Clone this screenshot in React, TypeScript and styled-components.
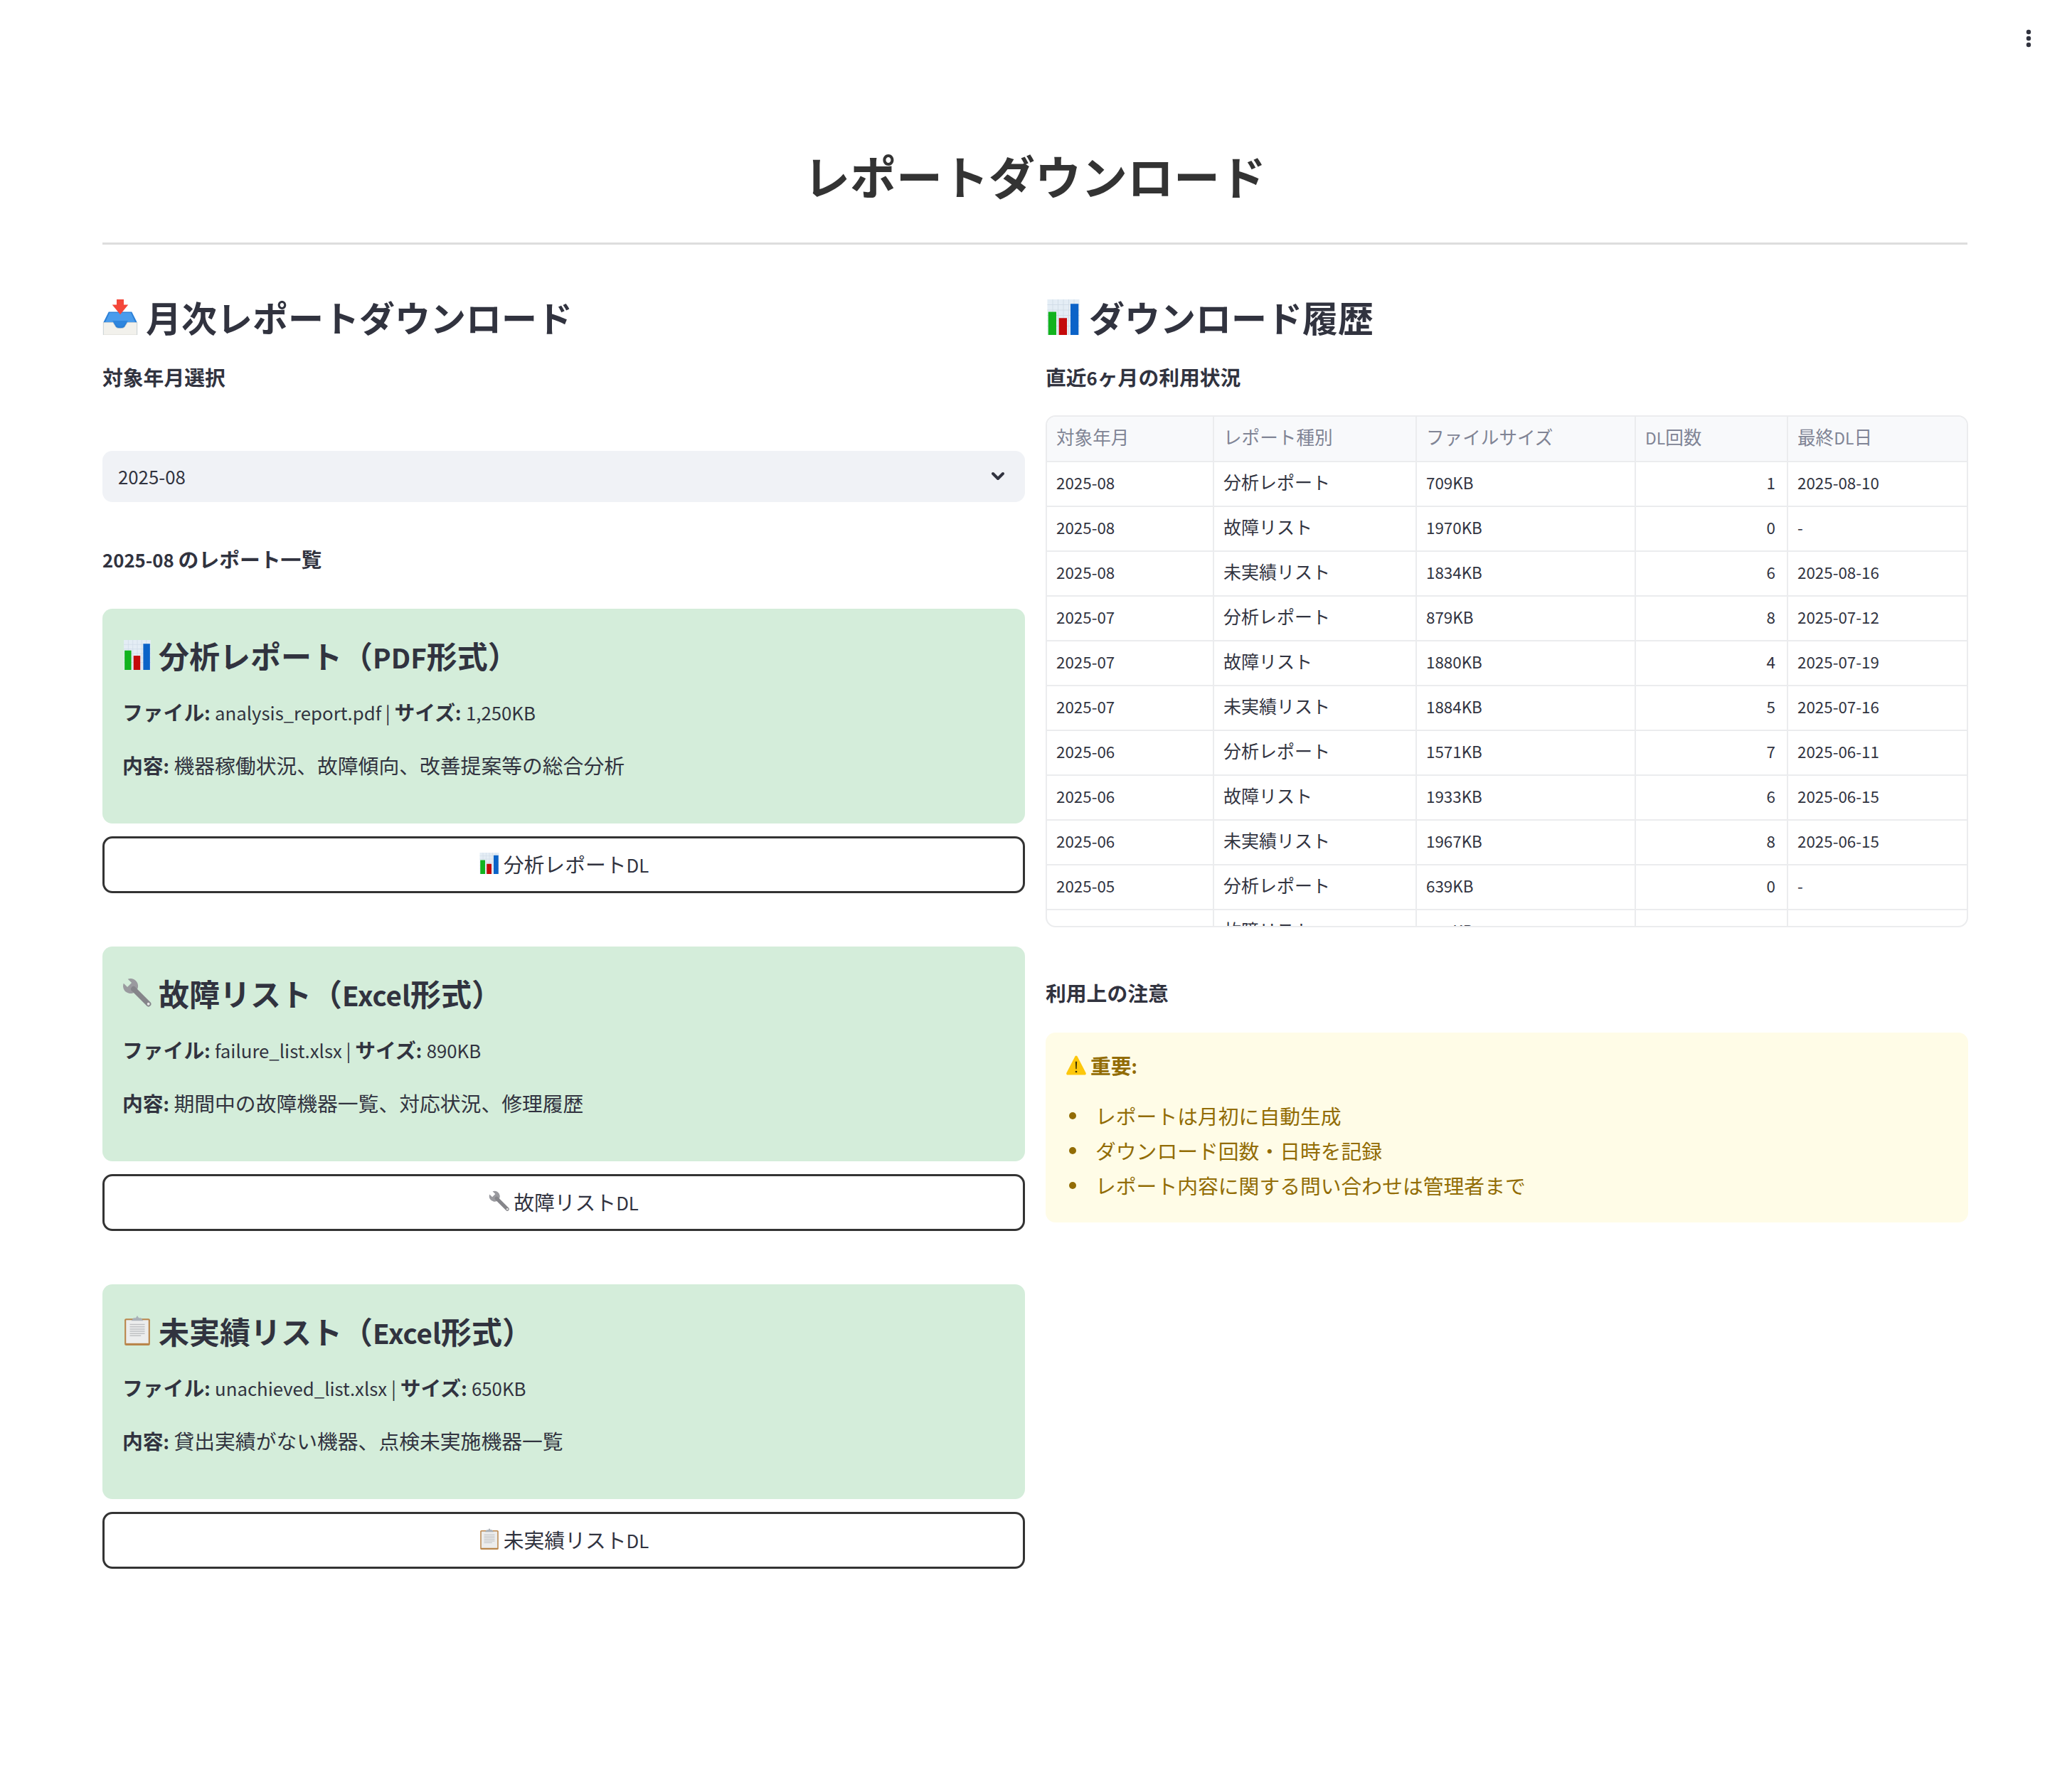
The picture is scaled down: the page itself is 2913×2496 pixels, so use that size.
import React from "react";
import styled, { createGlobalStyle } from "styled-components";

const GlobalStyle = createGlobalStyle`
  html, body {
    margin: 0;
    padding: 0;
    background: #fff;
  }
  body {
    font-family: "Noto Sans CJK JP", "Noto Sans", sans-serif;
    color: #31333f;
  }
`;

const Page = styled.div`
  width: 2913px;
  height: 2496px;
  padding: 197px 147px 0 144px;
  box-sizing: border-box;
  position: relative;
  overflow: hidden;
`;

const MenuDots = styled.svg`
  position: absolute;
  top: 38px;
  right: 55px;
`;

const Title = styled.h1`
  margin: 0;
  font-size: 65px;
  line-height: 98px;
  font-weight: 700;
  text-align: center;
  color: #333;
`;

const Rule = styled.hr`
  margin: 46px 0 0;
  border: 0;
  height: 3px;
  background: #ddd;
`;

const Columns = styled.div`
  display: grid;
  grid-template-columns: 1297px 1297px;
  column-gap: 29px;
  margin-top: 65px;
`;

const Column = styled.div`
  display: flex;
  flex-direction: column;
`;

const SectionTitle = styled.h2`
  margin: 0;
  font-size: 50px;
  line-height: 72px;
  padding-bottom: 2px;
  font-weight: 600;
  display: flex;
  align-items: center;
  gap: 11px;
  svg {
    margin-bottom: -2px;
  }
`;

const Label = styled.div<{ $top: number }>`
  margin-top: ${(p) => p.$top}px;
  font-size: 28.8px;
  line-height: 40px;
  font-weight: 600;
`;

const Select = styled.div`
  margin-top: 84px;
  height: 72px;
  border-radius: 14px;
  background: #f0f2f6;
  padding: 0 26px 0 22px;
  display: flex;
  align-items: center;
  justify-content: space-between;
  font-size: 28.8px;
`;

const ReportBlock = styled.section`
  margin-top: 50px;
  & + & {
    margin-top: 75px;
  }
`;

const Card = styled.div`
  background: #d4edda;
  border-radius: 14px;
  padding: 35px 28px 60px;
`;

const CardTitle = styled.h3`
  margin: 0;
  font-size: 43px;
  line-height: 60px;
  font-weight: 600;
  display: flex;
  align-items: center;
  gap: 9px;
`;

const CardLine = styled.p<{ $top: number }>`
  margin: ${(p) => p.$top}px 0 0;
  font-size: 28.8px;
  line-height: 44px;
  strong {
    font-weight: 600;
  }
`;

const DownloadButton = styled.button`
  margin-top: 18px;
  width: 100%;
  height: 80px;
  box-sizing: border-box;
  border: 3px solid #333;
  border-radius: 14px;
  padding: 0 0 4px;
  background: #fff;
  color: #31333f;
  font-family: inherit;
  font-size: 28.8px;
  display: flex;
  align-items: center;
  justify-content: center;
  gap: 5px;
`;

const TableFrame = styled.div`
  margin-top: 34px;
  height: 720px;
  box-sizing: border-box;
  border: 2px solid #ebecee;
  border-radius: 14px;
  overflow: hidden;
`;

const Table = styled.table`
  width: 100%;
  table-layout: fixed;
  border-collapse: collapse;
  font-size: 25px;
`;

const HeadCell = styled.th<{ $width: number }>`
  width: ${(p) => p.$width}px;
  height: 63px;
  box-sizing: border-box;
  padding: 0 14px 7px 13px;
  background: #f8f9fb;
  color: #808495;
  font-size: 25.6px;
  font-weight: 400;
  text-align: left;
  border-right: 2px solid #ebecee;
  border-bottom: 2px solid #ebecee;
  &:last-child {
    border-right: 0;
  }
`;

const Cell = styled.td<{ $right?: boolean }>`
  height: 63px;
  box-sizing: border-box;
  padding: 0 16px 7px 13px;
  text-align: ${(p) => (p.$right ? "right" : "left")};
  border-right: 2px solid #ebecee;
  border-bottom: 2px solid #ebecee;
  &:last-child {
    border-right: 0;
  }
`;

const Notice = styled.div`
  margin-top: 36px;
  height: 267px;
  box-sizing: border-box;
  background: #fffce7;
  border-radius: 14px;
  padding: 26px 29px 0;
  color: #926c05;
  font-size: 28.8px;
`;

const NoticeHead = styled.div`
  display: flex;
  align-items: center;
  gap: 5px;
  margin-left: -1px;
  line-height: 40px;
  font-weight: 600;
`;

const NoticeList = styled.ul`
  margin: 26px 0 0;
  padding: 0 0 0 41px;
  list-style: none;
`;

const NoticeItem = styled.li`
  position: relative;
  line-height: 49px;
  &::before {
    content: "";
    position: absolute;
    left: -37px;
    top: 20px;
    width: 10px;
    height: 10px;
    border-radius: 50%;
    background: #926c05;
  }
`;

const Lat = styled.span`
  font-size: 0.895em;
  line-height: 1;
`;

// Latin runs are narrower in the reference than in the CJK face, so they get scaled down
const Txt = ({ children }: { children: string }) => (
  <>
    {children.split(/([\x20-\x7e]+)/).map((part, i) =>
      /[\x21-\x7e]/.test(part) ? <Lat key={i}>{part}</Lat> : part
    )}
  </>
);

const ChartIcon = ({ size }: { size: number }) => (
  <svg width={size} height={size} viewBox="0 0 40 40">
    <rect x="2" y="0" width="36" height="40" fill="#e4edf5" />
    <path
      d="M2 6h36M2 12h36M2 18h36M2 24h36M2 30h36M8 0v40M14 0v40M20 0v40M26 0v40M32 0v40"
      stroke="#cfdbe6"
      strokeWidth="0.7"
    />
    <rect x="3" y="14" width="9" height="26" fill="#12b31e" />
    <rect x="15" y="21" width="9" height="19" fill="#c40a0a" />
    <rect x="28" y="5" width="9" height="35" fill="#0b63c8" />
  </svg>
);

const InboxIcon = ({ size }: { size: number }) => (
  <svg width={size} height={size} viewBox="0 0 40 40">
    <path d="M7 14h26l6 12v14H1V26z" fill="#2b7fd6" />
    <path d="M8 15h24l5 11H3z" fill="#4a9cec" />
    <path d="M1 26h11l3 5c1 1 2 1.500 5 1.500s4-.5 5-1.500l3-5h11v14H1z" fill="#f2f1ec" stroke="#d2d1cb" strokeWidth="0.6" />
    <path d="M11 24h18l-5 5c-2 2-6 2-8 0z" fill="#2f86de" />
    <path d="M16 0h8v6h5L20 17 11 6h5z" fill="#f4473a" />
  </svg>
);

const WrenchIcon = ({ size }: { size: number }) => (
  <svg width={size} height={size} viewBox="0 0 40 40">
    <path
      d="M7.350 1.690 L12.420 6.760 L6.760 12.420 L1.690 7.350 A10 10 0 1 0 7.350 1.690 Z"
      fill="#9a9a9f"
    />
    <path d="M15 15L35 35" stroke="#85858a" strokeWidth="7" strokeLinecap="round" />
    <circle cx="35" cy="35" r="1.800" fill="#e7e7e7" />
  </svg>
);

const ClipboardIcon = ({ size }: { size: number }) => (
  <svg width={size} height={size} viewBox="0 0 40 40">
    <rect x="3" y="4" width="34" height="36" rx="2" fill="#b9854a" />
    <rect x="5" y="6" width="30" height="31" fill="#eceded" />
    <path d="M10 12h20M10 15h20M10 18h20M10 21h20M10 24h20M10 27h15" stroke="#bfc1c3" strokeWidth="1.400" />
    <path d="M12 7l3-4h3l2-3 2 3h3l3 4z" fill="#aab1b8" />
  </svg>
);

const WarnIcon = ({ size }: { size: number }) => (
  <svg width={size} height={size} viewBox="0 0 40 40">
    <path d="M20 2 C21.500 2 22 3 23 5 L38 34 C39 36 38 38 36 38 H4 C2 38 1 36 2 34 L17 5 C18 3 18.500 2 20 2 Z" fill="#fdc70c" />
    <path d="M18.500 13h3l-.6 14h-1.800z" fill="#3a3000" />
    <circle cx="20" cy="32" r="1.800" fill="#3a3000" />
  </svg>
);

const Chevron = () => (
  <svg width="24" height="24" viewBox="0 0 24 24" fill="none" stroke="#31333f" strokeWidth="4" strokeLinecap="round" strokeLinejoin="round">
    <path d="M5 8l7 7 7-7" />
  </svg>
);

const reports = [
  {
    Icon: ChartIcon,
    title: "分析レポート（PDF形式）",
    file: "analysis_report.pdf",
    size: "1,250KB",
    body: "機器稼働状況、故障傾向、改善提案等の総合分析",
    button: "分析レポートDL",
  },
  {
    Icon: WrenchIcon,
    title: "故障リスト（Excel形式）",
    file: "failure_list.xlsx",
    size: "890KB",
    body: "期間中の故障機器一覧、対応状況、修理履歴",
    button: "故障リストDL",
  },
  {
    Icon: ClipboardIcon,
    title: "未実績リスト（Excel形式）",
    file: "unachieved_list.xlsx",
    size: "650KB",
    body: "貸出実績がない機器、点検未実施機器一覧",
    button: "未実績リストDL",
  },
];

const columns = [
  { label: "対象年月", width: 234 },
  { label: "レポート種別", width: 285 },
  { label: "ファイルサイズ", width: 308 },
  { label: "DL回数", width: 214 },
  { label: "最終DL日", width: 252 },
];

const history = [
  ["2025-08", "分析レポート", "709KB", "1", "2025-08-10"],
  ["2025-08", "故障リスト", "1970KB", "0", "-"],
  ["2025-08", "未実績リスト", "1834KB", "6", "2025-08-16"],
  ["2025-07", "分析レポート", "879KB", "8", "2025-07-12"],
  ["2025-07", "故障リスト", "1880KB", "4", "2025-07-19"],
  ["2025-07", "未実績リスト", "1884KB", "5", "2025-07-16"],
  ["2025-06", "分析レポート", "1571KB", "7", "2025-06-11"],
  ["2025-06", "故障リスト", "1933KB", "6", "2025-06-15"],
  ["2025-06", "未実績リスト", "1967KB", "8", "2025-06-15"],
  ["2025-05", "分析レポート", "639KB", "0", "-"],
  ["2025-05", "故障リスト", "690KB", "1", "2025-05-21"],
];

const App = () => (
  <Page>
    <GlobalStyle />
    <MenuDots width="12" height="34" viewBox="0 0 12 34" fill="#31333f">
      <circle cx="6" cy="7" r="3.200" />
      <circle cx="6" cy="16" r="3.200" />
      <circle cx="6" cy="25" r="3.200" />
    </MenuDots>
    <Title>レポートダウンロード</Title>
    <Rule />
    <Columns>
      <Column>
        <SectionTitle>
          <InboxIcon size={50} />
          月次レポートダウンロード
        </SectionTitle>
        <Label $top={27}>対象年月選択</Label>
        <Select>
          <Lat>2025-08</Lat>
          <Chevron />
        </Select>
        <Label $top={60}>
          <Txt>2025-08 のレポート一覧</Txt>
        </Label>
        {reports.map(({ Icon, title, file, size, body, button }) => (
          <ReportBlock key={button}>
            <Card>
              <CardTitle>
                <Icon size={42} />
                <span>
                  <Txt>{title}</Txt>
                </span>
              </CardTitle>
              <CardLine $top={28}>
                <strong>
                  <Txt>ファイル:</Txt>
                </strong>{" "}
                <Txt>{`${file} | `}</Txt>
                <strong>
                  <Txt>サイズ:</Txt>
                </strong>{" "}
                <Lat>{size}</Lat>
              </CardLine>
              <CardLine $top={31}>
                <strong>
                  <Txt>内容:</Txt>
                </strong>{" "}
                {body}
              </CardLine>
            </Card>
            <DownloadButton>
              <Icon size={30} />
              <span>
                <Txt>{button}</Txt>
              </span>
            </DownloadButton>
          </ReportBlock>
        ))}
      </Column>
      <Column>
        <SectionTitle>
          <ChartIcon size={50} />
          ダウンロード履歴
        </SectionTitle>
        <Label $top={27}>
          <Txt>直近6ヶ月の利用状況</Txt>
        </Label>
        <TableFrame>
          <Table>
            <thead>
              <tr>
                {columns.map((c) => (
                  <HeadCell key={c.label} $width={c.width}>
                    <Txt>{c.label}</Txt>
                  </HeadCell>
                ))}
              </tr>
            </thead>
            <tbody>
              {history.map((row, i) => (
                <tr key={i}>
                  {row.map((value, j) => (
                    <Cell key={j} $right={j === 3}>
                      <Txt>{value}</Txt>
                    </Cell>
                  ))}
                </tr>
              ))}
            </tbody>
          </Table>
        </TableFrame>
        <Label $top={72}>利用上の注意</Label>
        <Notice>
          <NoticeHead>
            <WarnIcon size={30} />
            <span>
              <Txt>重要:</Txt>
            </span>
          </NoticeHead>
          <NoticeList>
            <NoticeItem>レポートは月初に自動生成</NoticeItem>
            <NoticeItem>ダウンロード回数・日時を記録</NoticeItem>
            <NoticeItem>レポート内容に関する問い合わせは管理者まで</NoticeItem>
          </NoticeList>
        </Notice>
      </Column>
    </Columns>
  </Page>
);

export default App;
